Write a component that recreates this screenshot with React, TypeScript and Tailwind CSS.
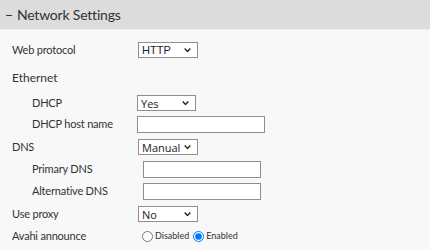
import { useState } from 'react';

const labelFont = { fontFamily: 'Lato, "Noto Sans", sans-serif' };

function Chevron() {
  return (
    <svg viewBox="0 0 10 6" className="absolute right-[6px] top-1/2 -translate-y-1/2 w-[7px] h-[5px]">
      <path d="M1 1 L5 5 L9 1" fill="none" stroke="#222" strokeWidth="2" />
    </svg>
  );
}

// looks like a native select box; only the chosen value is shown
function Select({ value, width = 'w-[60px]', font = '"Open Sans", "Noto Sans", sans-serif' }: { value: string; width?: string; font?: string }) {
  return (
    <div className={`relative ${width} h-[16px] border border-[#8f8f8f] bg-white flex items-center pl-[3px]`}>
      <span className="text-[11px] leading-none text-[#222]" style={{ fontFamily: font }}>
        {value}
      </span>
      <Chevron />
    </div>
  );
}

function TextInput({ width }: { width: string }) {
  return <input className={`${width} h-[17px] border border-[#8f8f8f] bg-white outline-none`} />;
}

function Row({ label, indent, mt, children, big }: { label: string; indent?: boolean; mt: string; children?: React.ReactNode; big?: boolean }) {
  return (
    <div className={`flex items-center h-[20px] ${mt}`}>
      <div
        className={`${indent ? 'pl-[32px] w-[137px]' : 'pl-[12px] w-[138px]'} ${big ? 'text-[12px]' : 'text-[11px] tracking-[-0.2px]'} text-[#333] whitespace-nowrap`}
        style={labelFont}
      >
        {label}
      </div>
      {children}
    </div>
  );
}

export default function App() {
  const [avahi, setAvahi] = useState('enabled');

  return (
    <div className="w-[430px] h-[250px] bg-[#f8f8f8] overflow-hidden">
      <div className="h-[29px] bg-[#dcdcdc] flex items-center pl-[5px] text-[14px] tracking-[-0.2px] text-[#333]" style={labelFont}>
        <span className="mr-[4px]">−</span>Network Settings
      </div>
      <div className="h-[1px] bg-[#ececec]" />

      <div className="pt-[10px]">
        <Row label="Web protocol" mt="mt-0">
          <Select value="HTTP" font='"Liberation Sans", Arial, sans-serif' />
        </Row>
        <Row label="Ethernet" mt="mt-[8px]" big />
        <Row label="DHCP" indent mt="mt-[5px]">
          <Select value="Yes" width="w-[59px]" />
        </Row>
        <Row label="DHCP host name" indent mt="mt-[1px]">
          <TextInput width="w-[128px]" />
        </Row>
        <Row label="DNS" mt="mt-[3px]">
          <Select value="Manual" />
        </Row>
        <Row label="Primary DNS" indent mt="mt-[2px]">
          <div className="ml-[6px]">
            <TextInput width="w-[118px]" />
          </div>
        </Row>
        <Row label="Alternative DNS" indent mt="mt-[2px]">
          <div className="ml-[6px]">
            <TextInput width="w-[118px]" />
          </div>
        </Row>
        <Row label="Use proxy" mt="mt-[3px]">
          <Select value="No" />
        </Row>
        <Row label="Avahi announce" mt="mt-[2px]">
          <div className="flex items-center ml-[4px] text-[9px] text-[#333]" style={labelFont}>
            <input
              type="radio"
              name="avahi"
              checked={avahi === 'disabled'}
              onChange={() => setAvahi('disabled')}
              className="m-0 w-[11px] h-[11px]"
            />
            <span className="ml-[2px] mr-[4px]">Disabled</span>
            <input
              type="radio"
              name="avahi"
              checked={avahi === 'enabled'}
              onChange={() => setAvahi('enabled')}
              className="m-0 w-[11px] h-[11px]"
            />
            <span className="ml-[2px]">Enabled</span>
          </div>
        </Row>
      </div>
    </div>
  );
}
